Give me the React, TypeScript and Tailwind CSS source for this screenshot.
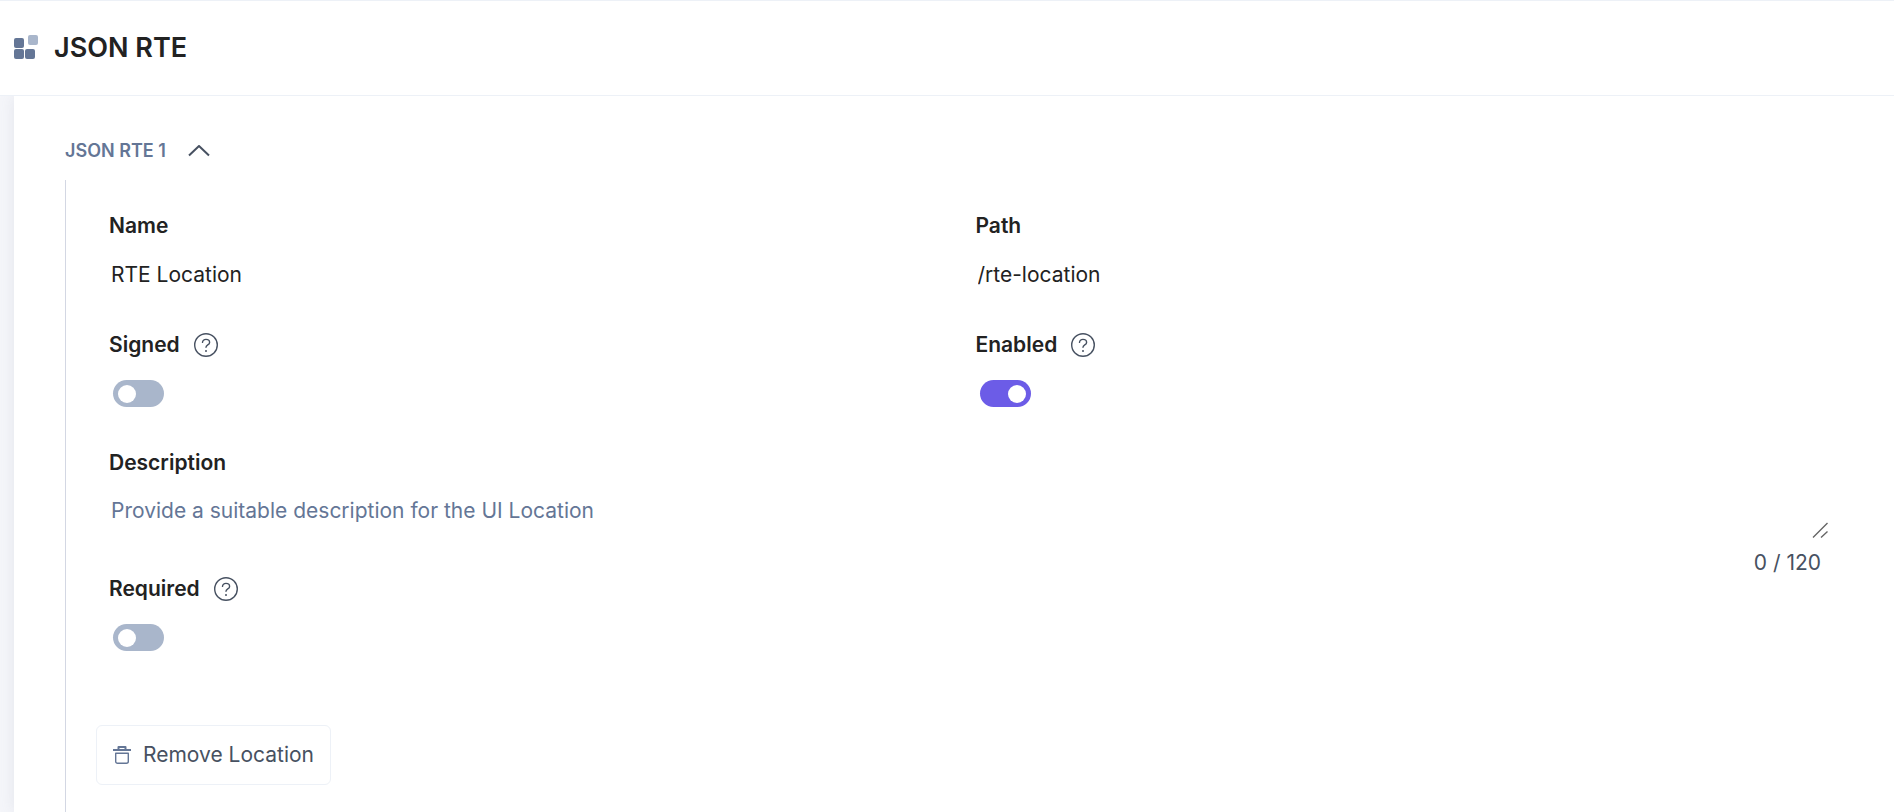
import { useId, useState } from "react";
import type { ReactNode } from "react";

const MAX_DESCRIPTION = 120;

function AppIcon() {
  return (
    <svg width="24" height="26" viewBox="0 0 24 26" aria-hidden="true">
      <rect x="0" y="3" width="10" height="10" rx="2" fill="#647696" />
      <rect x="14" y="0" width="10" height="10" rx="2" fill="#a9b6cb" />
      <rect x="0" y="14" width="10" height="10" rx="2" fill="#647696" />
      <rect x="11" y="14" width="10" height="10" rx="2" fill="#647696" />
    </svg>
  );
}

function HelpIcon() {
  return (
    <svg width="24" height="24" viewBox="0 0 24 24" fill="none" aria-hidden="true">
      <circle cx="12" cy="12" r="11.3" stroke="#475161" strokeWidth="1.4" />
      <path
        d="M8.500 9.400C8.500 7.600 10 6.400 12 6.400s3.600 1.200 3.600 3c0 2.600-3.600 2.400-3.600 4.800"
        stroke="#475161"
        strokeWidth="1.4"
        strokeLinecap="round"
      />
      <circle cx="12" cy="18" r="1" fill="#475161" />
    </svg>
  );
}

function TrashIcon() {
  return (
    <svg width="18" height="18" viewBox="0 0 18 18" fill="none" aria-hidden="true">
      <path d="M0 4h18" stroke="#647696" strokeWidth="2" />
      <path d="M5.500 3.500V1h7v2.500" stroke="#647696" strokeWidth="2" strokeLinejoin="round" />
      <path
        d="M2.700 7.200h12.600v8.300a1.800 1.800 0 0 1-1.800 1.800h-9a1.800 1.800 0 0 1-1.800-1.800z"
        stroke="#647696"
        strokeWidth="1.400"
        strokeLinejoin="round"
      />
    </svg>
  );
}

function FieldLabel({ htmlFor, children }: { htmlFor: string; children: ReactNode }) {
  return (
    <label htmlFor={htmlFor} className="block text-[21px] leading-7 font-semibold text-[#222222]">
      {children}
    </label>
  );
}

function TextField({ label, value }: { label: string; value: string }) {
  const id = useId();
  return (
    <div>
      <FieldLabel htmlFor={id}>{label}</FieldLabel>
      <input
        id={id}
        type="text"
        defaultValue={value}
        className="mt-[21px] block h-7 w-full bg-transparent pl-[2px] text-[21px] leading-7 text-[#222222] outline-none"
      />
    </div>
  );
}

function ToggleField({ label, on = false }: { label: string; on?: boolean }) {
  const id = useId();
  return (
    <div>
      <div className="flex items-center gap-[14px]">
        <FieldLabel htmlFor={id}>{label}</FieldLabel>
        <button type="button" aria-label={`About ${label}`}>
          <HelpIcon />
        </button>
      </div>
      <input
        id={id}
        type="checkbox"
        role="switch"
        defaultChecked={on}
        className="mt-[21px] ml-1 flex h-[27px] w-[51px] cursor-pointer appearance-none items-center rounded-full bg-[#a9b6cb] px-[5px] before:block before:h-[18px] before:w-[18px] before:rounded-full before:bg-white checked:justify-end checked:bg-[#6c5ce7]"
      />
    </div>
  );
}

function DescriptionField() {
  const [text, setText] = useState("");
  const id = useId();
  return (
    <div>
      <FieldLabel htmlFor={id}>Description</FieldLabel>
      <div className="relative mt-5 mr-[14px]">
        <textarea
          id={id}
          rows={1}
          maxLength={MAX_DESCRIPTION}
          value={text}
          onChange={(e) => setText(e.target.value)}
          placeholder="Provide a suitable description for the UI Location"
          className="block h-[41px] w-full resize-none overflow-hidden pl-[2px] text-[21px] leading-7 text-[#222222] outline-none placeholder:text-[#647696]"
        />
        <svg className="absolute right-0 bottom-0 h-4 w-4" viewBox="0 0 16 16" aria-hidden="true">
          <path d="M1 15.500L15.500 1M9 15.500L15.500 9.500" stroke="#666666" strokeWidth="1.4" />
        </svg>
      </div>
      <p className="mt-[13px] mr-[21px] text-right text-[21px] leading-6 text-[#475161]">
        {text.length} / {MAX_DESCRIPTION}
      </p>
    </div>
  );
}

export default function App() {
  const [open, setOpen] = useState(true);

  return (
    <div className="flex min-h-screen flex-col bg-[#f5f6fa] font-['Inter',sans-serif]">
      <header className="flex h-24 items-center gap-4 border-y border-[#edf1f7] bg-white px-[14px]">
        <AppIcon />
        <h1 className="text-[27px] leading-9 font-semibold text-[#222222]">JSON RTE</h1>
      </header>

      <div className="flex flex-1 overflow-hidden pl-[14px]">
        <main className="flex flex-1 flex-col bg-white pt-[41px] pr-10 pl-[51px] shadow-[0_0_16px_rgba(100,110,130,0.12)]">
          <button
            type="button"
            aria-expanded={open}
            onClick={() => setOpen(!open)}
            className="flex items-center gap-[22px] self-start text-[18px] leading-7 font-semibold text-[#647696]"
          >
            JSON RTE 1
            <svg
              width="22"
              height="12"
              viewBox="0 0 22 12"
              fill="none"
              className={open ? "" : "rotate-180"}
              aria-hidden="true"
            >
              <path d="M1 10.500L11 1L21 10.500" stroke="#475161" strokeWidth="2" strokeLinejoin="round" />
            </svg>
          </button>

          {open && (
            <section className="mt-[15px] flex-1 border-l border-[#d3d7e3] pt-8 pl-[30px]">
              <div className="pr-3 pl-[13px]">
                <div className="grid grid-cols-2 gap-y-[42px]">
                  <TextField label="Name" value="RTE Location" />
                  <TextField label="Path" value="/rte-location" />
                  <ToggleField label="Signed" />
                  <ToggleField label="Enabled" on />
                </div>
                <div className="mt-[42px]">
                  <DescriptionField />
                </div>
                <ToggleField label="Required" />
              </div>
              <button
                type="button"
                className="mt-[74px] flex h-[60px] items-center gap-3 rounded-md border border-[#edf1f7] px-4 text-[21px] leading-7 text-[#475161]"
              >
                <TrashIcon />
                Remove Location
              </button>
            </section>
          )}
        </main>
      </div>
    </div>
  );
}
